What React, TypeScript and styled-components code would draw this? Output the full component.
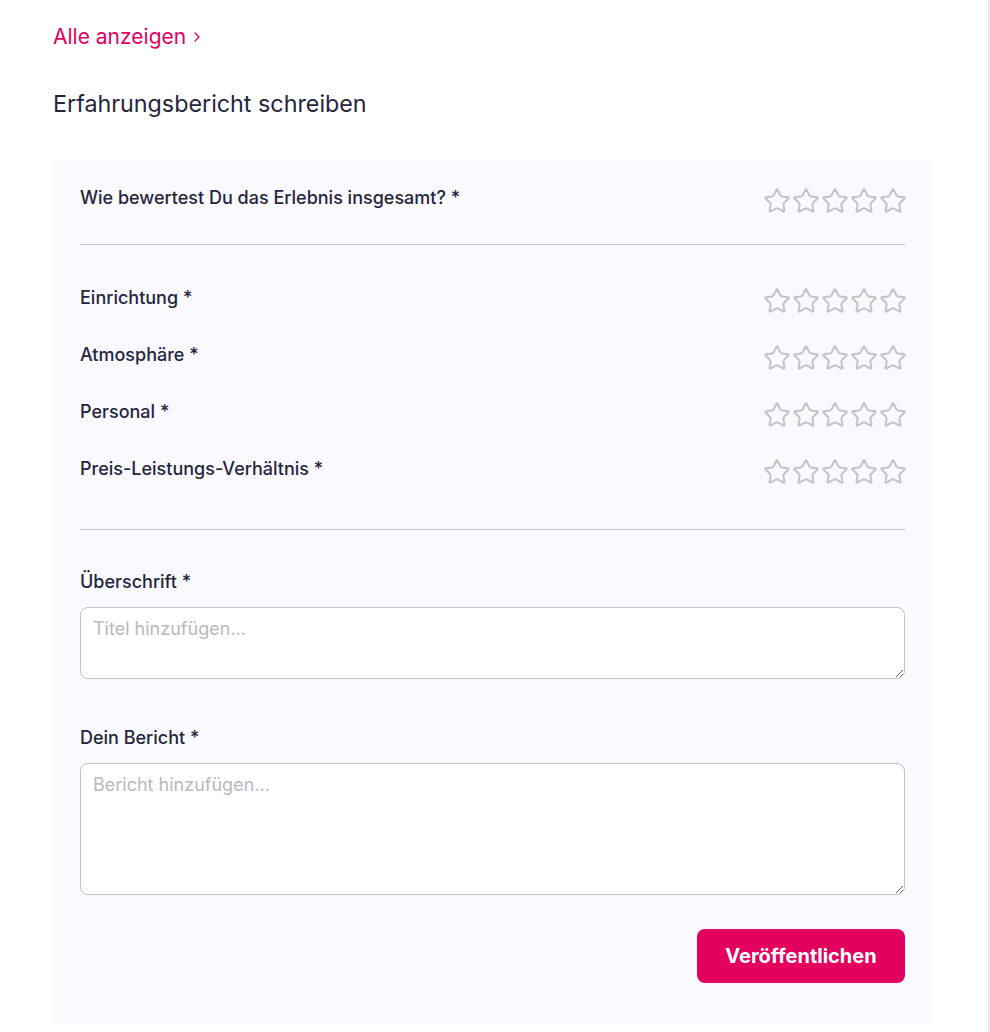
import React from "react";
import styled, { createGlobalStyle } from "styled-components";

const Global = createGlobalStyle`
  html, body { margin: 0; padding: 0; background: #ffffff; }
  body { font-family: Inter, Roboto, "Noto Sans", Arial, sans-serif; color: #27253c; }
  * { box-sizing: border-box; }
`;

const Page = styled.div`
  width: 990px;
  min-height: 1032px;
  border-right: 2px solid #ebe9fb;
  padding: 25px 56px 8px 53px;
`;

const MoreLink = styled.a`
  display: inline-flex;
  align-items: center;
  gap: 6px;
  font-size: 21px;
  line-height: 24px;
  color: #e4005f;
  text-decoration: none;
  cursor: pointer;
`;

const Heading = styled.h2`
  margin: 41px 0 42px;
  font-size: 23.3px;
  line-height: 28px;
  font-weight: 400;
  color: #27253c;
`;

const Panel = styled.section`
  background: #f9f9fe;
  padding: 25px 27px 41px;
  display: flex;
  flex-direction: column;
`;

const RatingRow = styled.div<{ $gapTop?: number }>`
  display: flex;
  justify-content: space-between;
  align-items: flex-start;
  margin-top: ${(p) => p.$gapTop ?? 0}px;
`;

const Label = styled.label`
  padding-top: 1px;
  font-size: 18px;
  line-height: 24px;
  font-weight: 500;
  color: #27253c;
`;

const Stars = styled.div`
  display: flex;
  gap: 1px;
  margin-top: 2px;
  margin-right: -2px;
`;

const Divider = styled.hr<{ $top: number; $bottom: number }>`
  border: none;
  height: 1px;
  background: #c4c3cb;
  margin: ${(p) => p.$top}px 0 ${(p) => p.$bottom}px;
`;

const Field = styled.div<{ $gapTop?: number }>`
  display: flex;
  flex-direction: column;
  gap: 13px;
  margin-top: ${(p) => p.$gapTop ?? 0}px;
`;

const TextArea = styled.textarea<{ $h: number }>`
  width: 100%;
  height: ${(p) => p.$h}px;
  border: 1px solid #c3c2ca;
  border-radius: 8px;
  background: #ffffff;
  padding: 10px 12px;
  font-family: Inter, Roboto, "Noto Sans", Arial, sans-serif;
  font-size: 18px;
  line-height: 22px;
  color: #27253c;
  resize: vertical;
  outline: none;
  &::placeholder { color: #bab9c1; }
`;

const Actions = styled.div`
  display: flex;
  justify-content: flex-end;
  margin-top: 34px;
`;

const Button = styled.button`
  width: 208px;
  height: 54px;
  border: none;
  border-radius: 8px;
  background: #e4005f;
  color: #ffffff;
  font-family: Inter, Roboto, "Noto Sans", Arial, sans-serif;
  font-size: 20px;
  font-weight: 700;
  cursor: pointer;
`;

const StarIcon = () => (
  <svg width="28" height="28" viewBox="0 0 24 24" fill="none" stroke="#c5c4ca" strokeWidth="1.8" strokeLinecap="round" strokeLinejoin="round">
    <path d="M11.525 2.295a.53.53 0 0 1 .95 0l2.31 4.679a2.123 2.123 0 0 0 1.595 1.16l5.166.756a.53.53 0 0 1 .294.904l-3.736 3.638a2.123 2.123 0 0 0-.611 1.878l.882 5.14a.53.53 0 0 1-.771.56l-4.618-2.428a2.122 2.122 0 0 0-1.973 0L6.396 21.01a.53.53 0 0 1-.77-.56l.881-5.139a2.122 2.122 0 0 0-.611-1.879L2.16 9.795a.53.53 0 0 1 .294-.906l5.165-.755a2.122 2.122 0 0 0 1.597-1.16z" />
  </svg>
);

const StarRating = () => (
  <Stars>
    {[0, 1, 2, 3, 4].map((i) => (
      <StarIcon key={i} />
    ))}
  </Stars>
);

const criteria = ["Einrichtung *", "Atmosphäre *", "Personal *", "Preis-Leistungs-Verhältnis *"];

export default function App() {
  return (
    <>
      <Global />
      <Page>
        <MoreLink>
          Alle anzeigen
          <svg width="10" height="14" viewBox="0 0 10 14" fill="none" stroke="#e4005f" strokeWidth="1.3" strokeLinecap="round" strokeLinejoin="round">
            <path d="M3 3l4 4-4 4" />
          </svg>
        </MoreLink>
        <Heading>Erfahrungsbericht schreiben</Heading>
        <Panel>
          <RatingRow>
            <Label>Wie bewertest Du das Erlebnis insgesamt? *</Label>
            <StarRating />
          </RatingRow>
          <Divider $top={29} $bottom={40} />
          {criteria.map((c, i) => (
            <RatingRow key={c} $gapTop={i === 0 ? 0 : 27}>
              <Label>{c}</Label>
              <StarRating />
            </RatingRow>
          ))}
          <Divider $top={43} $bottom={39} />
          <Field>
            <Label>Überschrift *</Label>
            <TextArea $h={72} placeholder="Titel hinzufügen..." />
          </Field>
          <Field $gapTop={46}>
            <Label>Dein Bericht *</Label>
            <TextArea $h={132} placeholder="Bericht hinzufügen..." />
          </Field>
          <Actions>
            <Button>Veröffentlichen</Button>
          </Actions>
        </Panel>
      </Page>
    </>
  );
}
